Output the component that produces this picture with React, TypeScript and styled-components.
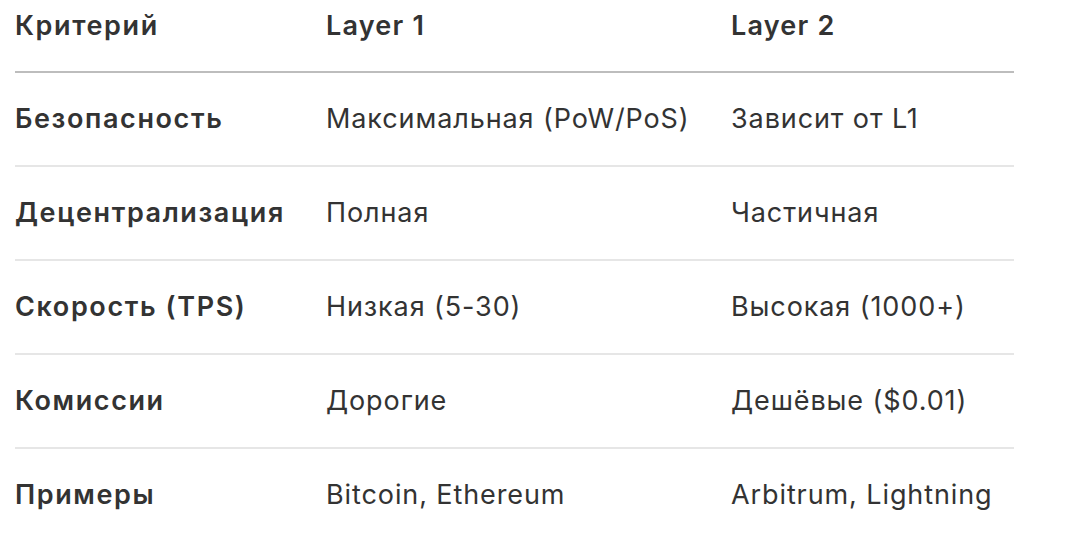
import React from "react";
import styled, { createGlobalStyle } from "styled-components";

const Global = createGlobalStyle`
  html, body { margin: 0; padding: 0; background: #ffffff; }
  body { font-family: Inter, "Noto Sans", "Liberation Sans", sans-serif; color: #333333; }
`;

const Page = styled.div`
  padding: 0 72px 0 15px;
  width: 999px;
`;

const Table = styled.div`
  display: grid;
  grid-template-columns: 311px 405px 283px;
`;

const Row = styled.div<{ $head?: boolean }>`
  display: contents;
  & > div {
    border-bottom: 2px solid ${(p) => (p.$head ? "#bdbdbd" : "#e6e6e6")};
    padding: ${(p) => (p.$head ? "8px 0 27px 0" : "28px 0 28px 0")};
    font-weight: ${(p) => (p.$head ? 600 : 400)};
    letter-spacing: ${(p) => (p.$head ? "1.2px" : "0.9px")};
  }
`;

const LastRow = styled(Row)`
  & > div { border-bottom: none; }
`;

const Cell = styled.div<{ $strong?: boolean }>`
  font-size: 27px;
  line-height: 36px;
  white-space: nowrap;
  ${(p) => (p.$strong ? "font-weight: 600 !important; letter-spacing: 1.6px !important;" : "")}
`;

const rows: [string, string, string][] = [
  ["Безопасность", "Максимальная (PoW/PoS)", "Зависит от L1"],
  ["Децентрализация", "Полная", "Частичная"],
  ["Скорость (TPS)", "Низкая (5-30)", "Высокая (1000+)"],
  ["Комиссии", "Дорогие", "Дешёвые ($0.01)"],
  ["Примеры", "Bitcoin, Ethereum", "Arbitrum, Lightning"],
];

export default function App() {
  return (
    <>
      <Global />
      <Page>
        <Table>
          <Row $head>
            <Cell $strong>Критерий</Cell>
            <Cell>Layer 1</Cell>
            <Cell>Layer 2</Cell>
          </Row>
          {rows.map((r, i) => {
            const R = i === rows.length - 1 ? LastRow : Row;
            return (
              <R key={r[0]}>
                <Cell $strong>{r[0]}</Cell>
                <Cell>{r[1]}</Cell>
                <Cell>{r[2]}</Cell>
              </R>
            );
          })}
        </Table>
      </Page>
    </>
  );
}
